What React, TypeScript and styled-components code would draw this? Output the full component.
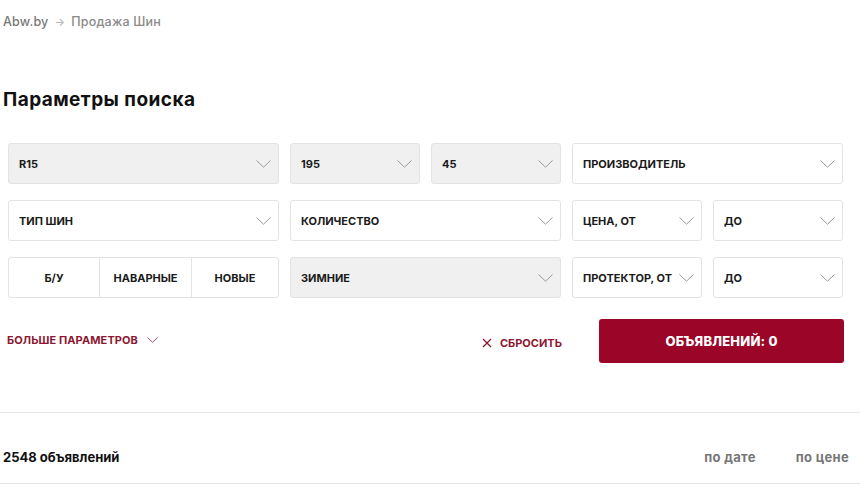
import React from "react";
import styled, { createGlobalStyle } from "styled-components";

const GlobalStyle = createGlobalStyle`
  html, body {
    margin: 0;
    padding: 0;
    background: #ffffff;
  }
  body {
    font-family: "Inter", "Open Sans", "Liberation Sans", sans-serif;
    color: #1b1b1b;
    -webkit-font-smoothing: antialiased;
  }
`;

const Page = styled.div`
  width: 860px;
  overflow: hidden;
`;

const Inner = styled.div`
  padding: 0 3px;
`;

const Breadcrumbs = styled.nav`
  display: flex;
  align-items: center;
  gap: 6px;
  padding-top: 14px;
  height: 16px;
  font-size: 12.5px;
  line-height: 16px;
  letter-spacing: 0.2px;
  color: #7d7d7d;
  font-weight: 500;
`;

const Crumb = styled.span<{ $first?: boolean }>`
  color: ${(p) => (p.$first ? "#777" : "#8a8a8a")};
`;

const Arrow = styled.span`
  color: #b5b5b5;
  font-size: 11px;
`;

const Title = styled.h1`
  margin: 58px 0 0;
  font-size: 19px;
  line-height: 24px;
  font-weight: 700;
  letter-spacing: 0.45px;
  color: #111;
`;

const Grid = styled.div`
  margin: 31px 0 0 5px;
  width: 835px;
  display: grid;
  grid-template-columns: repeat(6, 1fr);
  grid-auto-rows: 41px;
  column-gap: 11px;
  row-gap: 16px;
`;

const Field = styled.div<{ $span: number; $filled?: boolean }>`
  grid-column: span ${(p) => p.$span};
  display: flex;
  align-items: center;
  justify-content: space-between;
  padding: 0 7px 0 10px;
  box-sizing: border-box;
  border: 1px solid #e3e3e3;
  border-radius: 3px;
  background: ${(p) => (p.$filled ? "#f0f0f0" : "#ffffff")};
  font-size: 11px;
  font-weight: 700;
  text-transform: uppercase;
  color: #1b1b1b;
  white-space: nowrap;
`;

const Segmented = styled.div`
  grid-column: span 2;
  display: grid;
  grid-template-columns: 90px 92px 1fr;
  border: 1px solid #e3e3e3;
  border-radius: 3px;
  overflow: hidden;
`;

const Segment = styled.div`
  display: flex;
  align-items: center;
  justify-content: center;
  font-size: 11px;
  font-weight: 700;
  text-transform: uppercase;
  color: #1b1b1b;
  & + & {
    border-left: 1px solid #e3e3e3;
  }
`;

const Chevron = ({ color = "#9a9a9a", w = 15 }: { color?: string; w?: number }) => (
  <svg width={w} height={8} viewBox="0 0 15 8" fill="none">
    <path d="M0.5 0.5 L7.5 7.2 L14.5 0.5" stroke={color} strokeWidth="1" />
  </svg>
);

const Actions = styled.div`
  margin: 21px 0 0 4px;
  width: 837px;
  height: 44px;
  display: flex;
  align-items: center;
`;

const MoreLink = styled.button`
  display: flex;
  align-items: center;
  gap: 9px;
  padding: 0;
  margin-top: -2px;
  border: 0;
  background: none;
  font-family: inherit;
  font-size: 11px;
  font-weight: 700;
  letter-spacing: 0.1px;
  text-transform: uppercase;
  color: #8c1732;
`;

const ResetLink = styled.button`
  margin-left: auto;
  display: flex;
  align-items: center;
  gap: 8px;
  padding: 0;
  margin-top: 4px;
  border: 0;
  background: none;
  font-family: inherit;
  font-size: 11px;
  font-weight: 700;
  text-transform: uppercase;
  color: #8c1732;
`;

const SubmitButton = styled.button`
  margin-left: 37px;
  width: 245px;
  height: 44px;
  border: 0;
  border-radius: 3px;
  background: #9b0527;
  color: #ffffff;
  font-family: inherit;
  font-size: 13px;
  font-weight: 800;
  letter-spacing: 0.2px;
  text-transform: uppercase;
`;

const Divider = styled.hr`
  margin: 49px 0 0;
  border: 0;
  border-top: 1px solid #e6e6e6;
`;

const ResultsBar = styled.div`
  display: flex;
  align-items: center;
  height: 70px;
  padding: 0 11px 0 3px;
  border-bottom: 1px solid #e6e6e6;
`;

const Count = styled.div`
  font-size: 13px;
  font-weight: 700;
  color: #111;
  margin-top: 17px;
`;

const SortGroup = styled.div`
  margin-left: auto;
  display: flex;
  gap: 40px;
  margin-top: 17px;
`;

const SortLink = styled.span`
  font-size: 13px;
  font-weight: 700;
  letter-spacing: 0.3px;
  color: #777;
`;

type FieldDef = { label: string; span: number; filled?: boolean };

const row1: FieldDef[] = [
  { label: "R15", span: 2, filled: true },
  { label: "195", span: 1, filled: true },
  { label: "45", span: 1, filled: true },
  { label: "Производитель", span: 2 },
];

const row2: FieldDef[] = [
  { label: "Тип шин", span: 2 },
  { label: "Количество", span: 2 },
  { label: "Цена, от", span: 1 },
  { label: "до", span: 1 },
];

const row3Tail: FieldDef[] = [
  { label: "Зимние", span: 2, filled: true },
  { label: "Протектор, от", span: 1 },
  { label: "до", span: 1 },
];

const renderField = (f: FieldDef, i: number) => (
  <Field key={f.label + i} $span={f.span} $filled={f.filled}>
    <span>{f.label}</span>
    <Chevron />
  </Field>
);

export default function App() {
  return (
    <Page>
      <GlobalStyle />
      <Inner>
        <Breadcrumbs>
          <Crumb $first>Abw.by</Crumb>
          <Arrow>→</Arrow>
          <Crumb>Продажа Шин</Crumb>
        </Breadcrumbs>
        <Title>Параметры поиска</Title>
        <Grid>
          {row1.map(renderField)}
          {row2.map(renderField)}
          <Segmented>
            <Segment>Б/У</Segment>
            <Segment>Наварные</Segment>
            <Segment>Новые</Segment>
          </Segmented>
          {row3Tail.map(renderField)}
        </Grid>
        <Actions>
          <MoreLink>
            Больше параметров
            <Chevron color="#8c1732" w={11} />
          </MoreLink>
          <ResetLink>
            <svg width="10" height="10" viewBox="0 0 10 10">
              <path d="M1 1 L9 9 M9 1 L1 9" stroke="#8c1732" strokeWidth="1.3" />
            </svg>
            Сбросить
          </ResetLink>
          <SubmitButton>Объявлений: 0</SubmitButton>
        </Actions>
      </Inner>
      <Divider />
      <ResultsBar>
        <Count>2548 объявлений</Count>
        <SortGroup>
          <SortLink>по дате</SortLink>
          <SortLink>по цене</SortLink>
        </SortGroup>
      </ResultsBar>
    </Page>
  );
}
